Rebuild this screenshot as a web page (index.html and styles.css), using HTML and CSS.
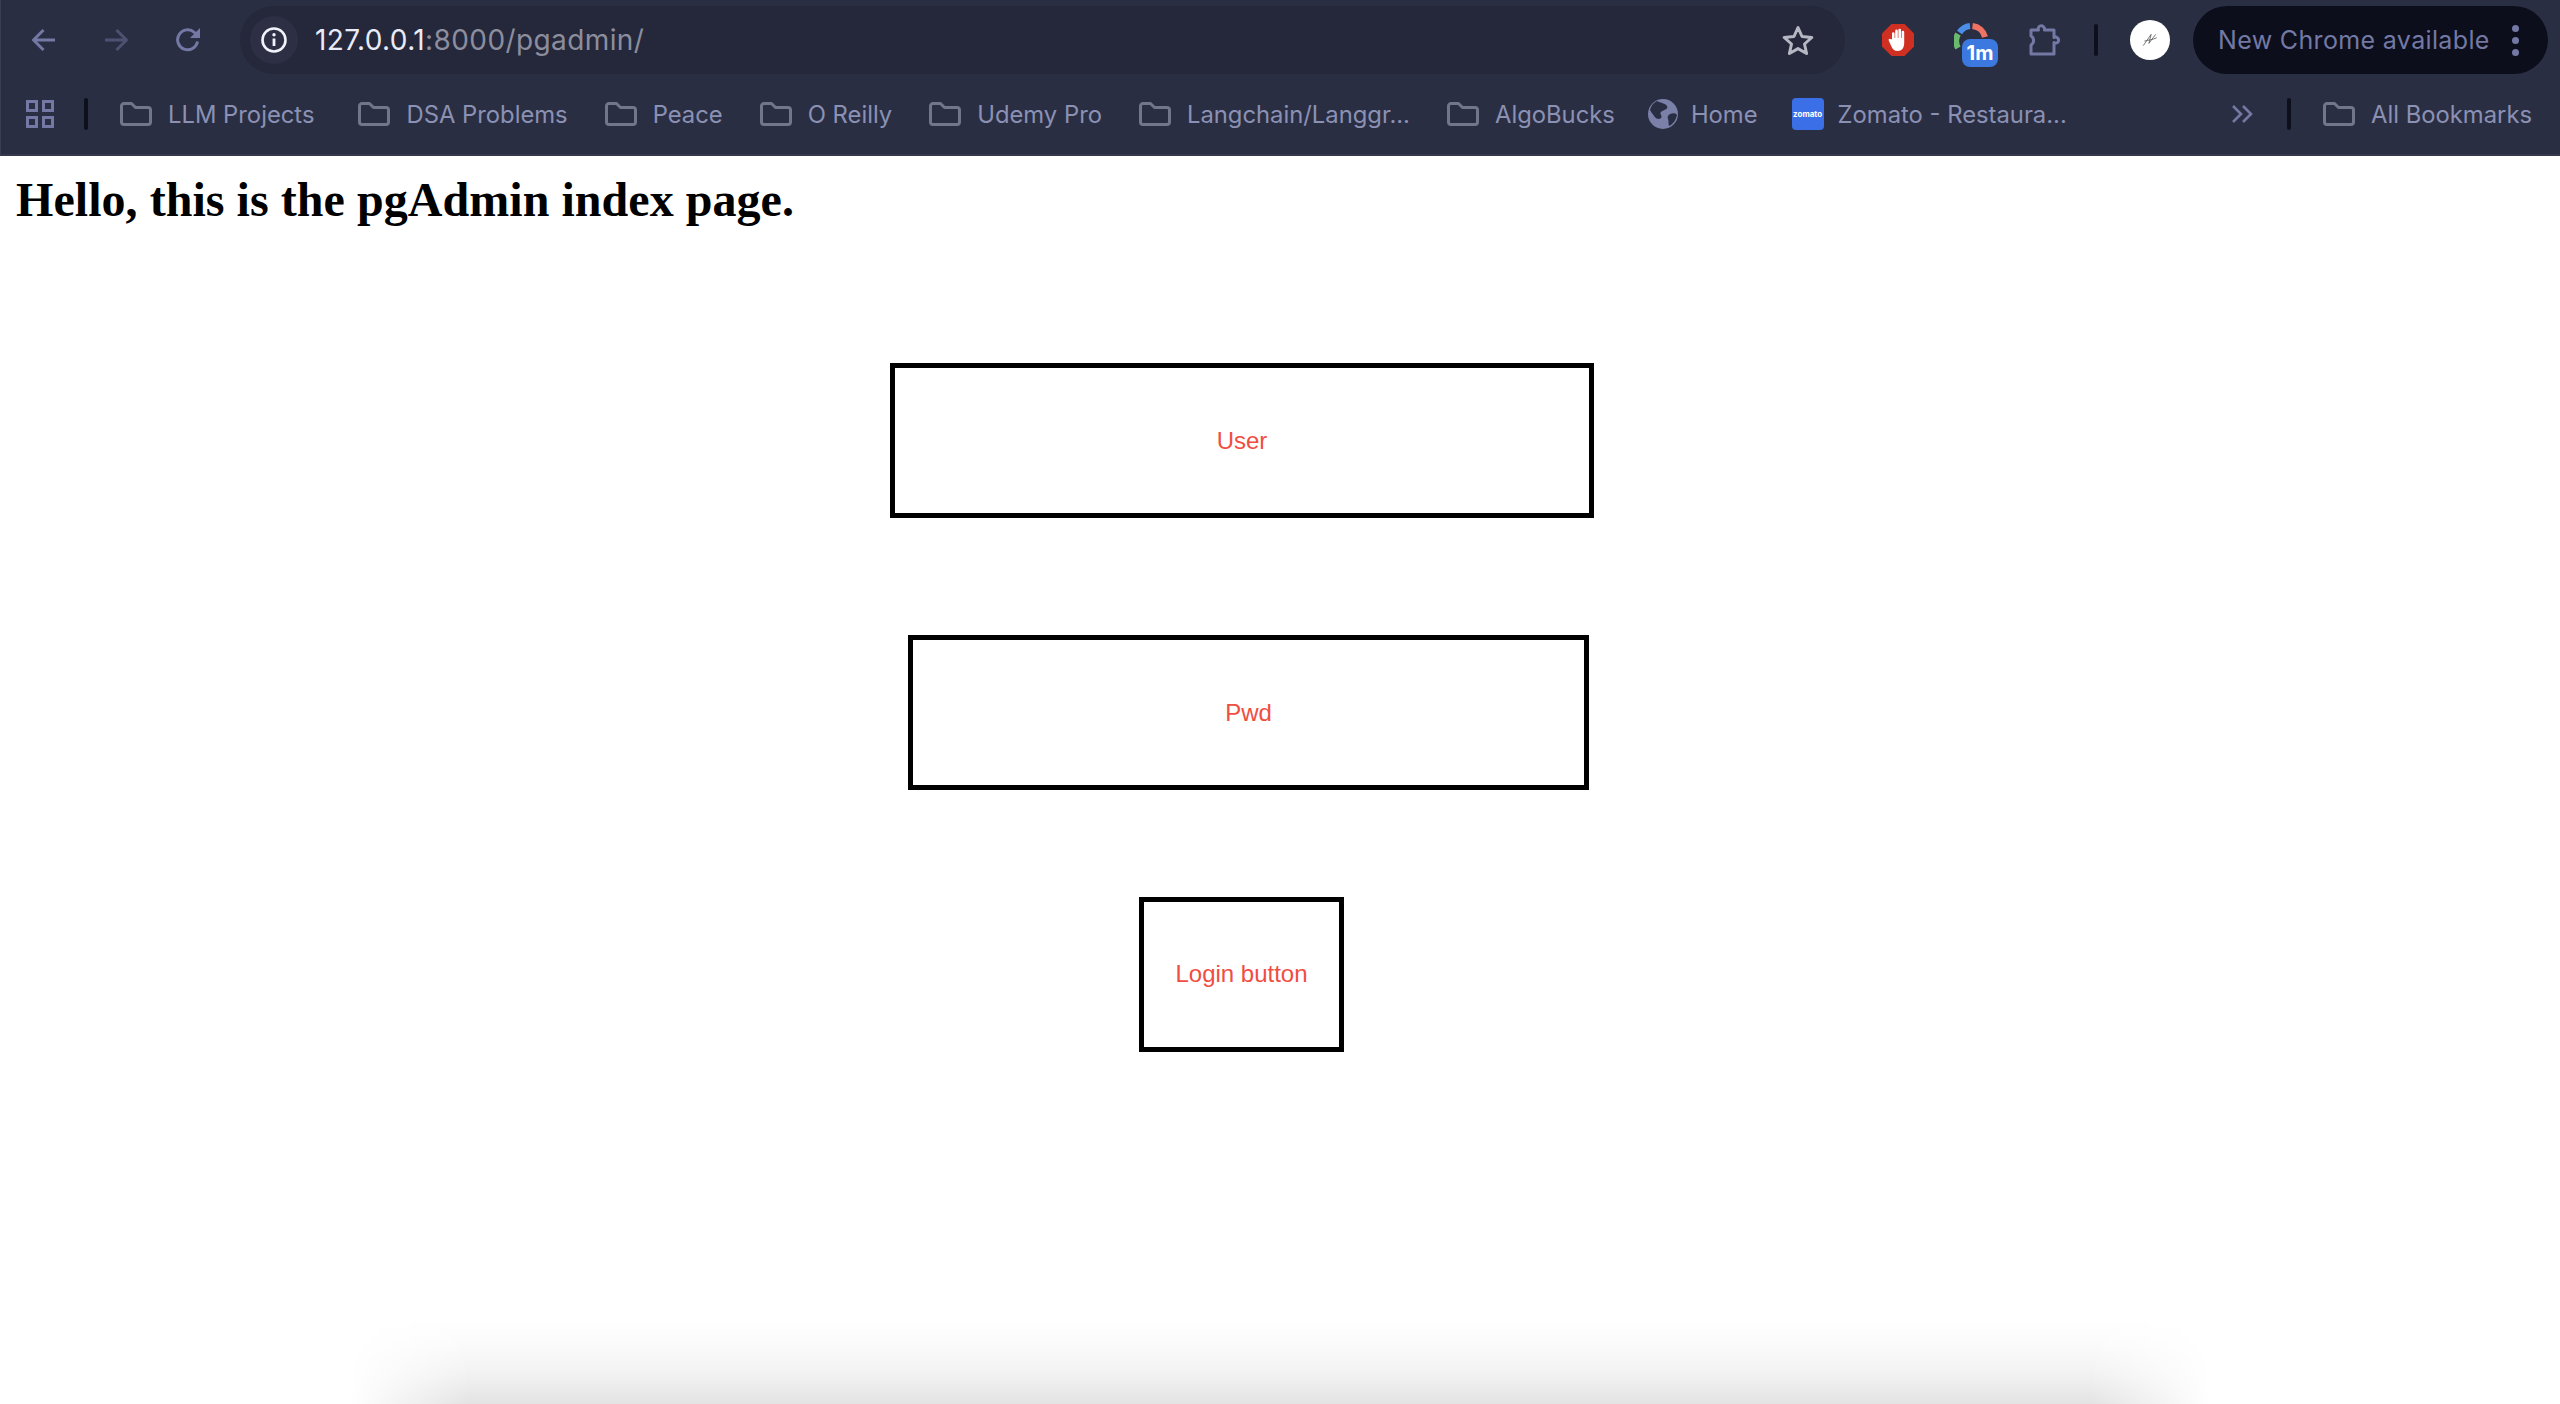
FILE: index.html
```html
<!DOCTYPE html>
<html lang="en">
<head>
    <meta charset="UTF-8">
    <meta name="viewport" content="width=device-width, initial-scale=1.0">
    <title>pgAdmin index</title>
    <link rel="stylesheet" href="styles.css">
</head>
<body>

    <svg class="icon-defs" width="0" height="0">
        <symbol id="folder" viewBox="0 0 32 24">
            <path d="M1.5 4a2.5 2.5 0 0 1 2.5-2.5h7.5l4 4H28a2.5 2.5 0 0 1 2.5 2.5v12a2.5 2.5 0 0 1-2.5 2.5H4A2.5 2.5 0 0 1 1.5 20z" fill="none" stroke="currentColor" stroke-width="3" stroke-linejoin="round"/>
        </symbol>
    </svg>

    <header class="browser">
        <div class="toolbar">
            <svg class="nav-icon" viewBox="0 0 24 24"><path d="M23 12H2M11.5 2 1.5 12l10 10" fill="none" stroke="currentColor" stroke-width="3"/></svg>
            <svg class="nav-icon nav-off" viewBox="0 0 24 24"><path d="M1 12h21M12.500 2l10 10-10 10" fill="none" stroke="currentColor" stroke-width="3"/></svg>
            <svg class="nav-icon" viewBox="0 0 24 24"><path d="M21.500 13.500A10 10 0 1 1 18.500 4.500L22 8" fill="none" stroke="currentColor" stroke-width="3"/><path d="M24 0v10H14z" fill="currentColor"/></svg>

            <div class="omnibox">
                <span class="site-chip">
                    <svg class="info-icon" viewBox="0 0 26 26"><circle cx="13" cy="13" r="11.500" fill="none" stroke="currentColor" stroke-width="2.600"/><path d="M13 11.500v7.500" stroke="currentColor" stroke-width="2.800"/><circle cx="13" cy="7.800" r="1.700" fill="currentColor"/></svg>
                </span>
                <span class="url"><span class="url-host">127.0.0.1</span>:8000/pgadmin/</span>
                <svg class="star-icon" viewBox="0 0 32 30"><path d="M16 2.500l4 9 9.800 1-7.300 6.500 2.100 9.500L16 23.600 7.400 28.500l2.100-9.500-7.300-6.500 9.800-1z" fill="none" stroke="currentColor" stroke-width="3" stroke-linejoin="round"/></svg>
            </div>

            <svg class="stop-icon" viewBox="0 0 32 32">
                <path d="M9.500 0h13L32 9.500v13L22.500 32h-13L0 22.500v-13z" fill="#d03022"/>
                <path d="M10 15V9.500a1.300 1.300 0 0 1 2.600 0V14h.6V6.800a1.300 1.300 0 0 1 2.600 0V14h.6V6a1.300 1.300 0 0 1 2.600 0v8h.6V8a1.300 1.300 0 0 1 2.600 0v11c0 5-2.500 8-6.500 8-3.500 0-5-1.700-6.500-5l-2.500-5.500c-.6-1.400 1.500-2.500 2.400-1z" fill="#fff"/>
            </svg>

            <div class="timer-ext">
                <svg class="gauge-icon" viewBox="0 0 34 34">
                    <path d="M4 25A14.500 14.500 0 0 1 4 11" fill="none" stroke="#69b96f" stroke-width="6"/>
                    <path d="M5.500 9.500A14.500 14.500 0 0 1 16 3" fill="none" stroke="#4b8fe8" stroke-width="6"/>
                    <path d="M18.500 3A14.500 14.500 0 0 1 31 14" fill="none" stroke="#ee7365" stroke-width="6"/>
                </svg>
                <span class="timer-badge">1m</span>
            </div>

            <svg class="puzzle-icon" viewBox="0 0 32 32"><path d="M3 6h7.500a3 3 0 0 1 5.500-2.500 3 3 0 0 1 .5 2.500H26v7.500a3 3 0 0 1 3.500.5 2.800 2.800 0 0 1-3.500 4.500V30H3v-9a5 5 0 0 0 2.500-4.500A5 5 0 0 0 3 12z" fill="none" stroke="currentColor" stroke-width="3" stroke-linejoin="round"/></svg>

            <span class="bar-divider"></span>

            <span class="avatar">
                <svg class="avatar-sign" viewBox="0 0 16 16"><path d="M2 13 9 3 7 11l6-8M3 9c3-1 7-1 11-3" fill="none" stroke="#555" stroke-width=".7"/></svg>
            </span>

            <div class="update-chip">
                <span>New Chrome available</span>
                <span class="kebab"><i></i><i></i><i></i></span>
            </div>
        </div>

        <nav class="bookmarks">
            <svg class="apps-icon" viewBox="0 0 28 28"><path d="M1.500 1.500h9v9h-9zM17.500 1.500h9v9h-9zM1.500 17.500h9v9h-9zM17.500 17.500h9v9h-9z" fill="none" stroke="currentColor" stroke-width="3"/></svg>
            <span class="bar-divider divider-apps"></span>

            <a class="bookmark bookmark-first"><svg class="folder"><use href="#folder"/></svg>LLM Projects</a>
            <a class="bookmark"><svg class="folder"><use href="#folder"/></svg>DSA Problems</a>
            <a class="bookmark"><svg class="folder"><use href="#folder"/></svg>Peace</a>
            <a class="bookmark"><svg class="folder"><use href="#folder"/></svg>O Reilly</a>
            <a class="bookmark"><svg class="folder"><use href="#folder"/></svg>Udemy Pro</a>
            <a class="bookmark"><svg class="folder"><use href="#folder"/></svg>Langchain/Langgr...</a>
            <a class="bookmark bookmark-algo"><svg class="folder"><use href="#folder"/></svg>AlgoBucks</a>
            <a class="bookmark bookmark-home">
                <svg class="globe" viewBox="0 0 30 30"><circle cx="15" cy="15" r="15" fill="#7a80a8"/><path d="M9 2c4 2 8 2 10 5s-4 4-6 6 2 4 0 6-5 1-7-2-3-4-4-6C3 7 5 4 9 2zM22 15c3-1 6-1 7 1-1 5-4 9-8 11-1-3 0-5-1-7s0-4 2-5z" fill="#2a2e42"/></svg>
                Home
            </a>
            <a class="bookmark bookmark-zomato"><span class="zomato-icon">zomato</span>Zomato - Restaura...</a>

            <svg class="more-icon" viewBox="0 0 22 20"><path d="M2 2l8 8-8 8M12 2l8 8-8 8" fill="none" stroke="currentColor" stroke-width="2.600"/></svg>
            <span class="bar-divider divider-more"></span>
            <a class="bookmark bookmark-all"><svg class="folder"><use href="#folder"/></svg>All Bookmarks</a>
        </nav>
    </header>

    <main class="page">
        <h1>Hello, this is the pgAdmin index page.</h1>

        <div class="login-form">
            <div class="box box-user">User</div>
            <div class="box box-pwd">Pwd</div>
            <div class="box box-login">Login button</div>
        </div>

        <div class="bottom-shadow"></div>
    </main>

</body>
</html>
```

FILE: styles.css
```css
body {
    margin: 0;
    height: 1404px;
    overflow: hidden;
    background: #fff;
    font-family: 'Inter', 'Liberation Sans', sans-serif;
}

.icon-defs {
    position: absolute;
}

svg {
    flex-shrink: 0;
}

/* browser chrome */
.browser {
    height: 156px;
    box-sizing: border-box;
    background: #2a2e42;
    border-left: 1px solid #3a3d52;
    border-bottom: 2px solid #35384c;
    color: #7379a4;
}

.toolbar {
    height: 80px;
    display: flex;
    align-items: center;
    padding: 0 12px 0 31px;
}

.nav-icon {
    width: 24px;
    height: 24px;
    margin-right: 48px;
}

.nav-off {
    color: #4e5272;
}

.omnibox {
    width: 1605px;
    height: 68px;
    margin-left: -8px;
    padding: 0 31px 0 10px;
    box-sizing: border-box;
    display: flex;
    align-items: center;
    background: #25273a;
    border-radius: 34px;
}

.site-chip {
    width: 48px;
    height: 48px;
    display: flex;
    align-items: center;
    justify-content: center;
    border-radius: 50%;
    background: #2d3044;
    color: #f1f2fa;
}

.info-icon {
    width: 26px;
    height: 26px;
}

.url {
    margin-left: 17px;
    flex: 1;
    font-size: 28px;
    letter-spacing: 0.4px;
    color: #8c8e9e;
}

.url-host {
    color: #e9ebf8;
}

.star-icon {
    width: 32px;
    height: 30px;
    color: #b5b7c2;
}

.stop-icon {
    width: 32px;
    height: 32px;
    margin-left: 37px;
}

.timer-ext {
    position: relative;
    width: 34px;
    height: 34px;
    margin-left: 40px;
}

.gauge-icon {
    width: 34px;
    height: 34px;
}

.timer-badge {
    position: absolute;
    left: 8px;
    top: 16px;
    width: 36px;
    height: 28px;
    line-height: 28px;
    text-align: center;
    border-radius: 8px;
    background: #3b78e0;
    color: #fff;
    font-size: 20px;
    font-weight: 700;
}

.puzzle-icon {
    width: 32px;
    height: 32px;
    margin-left: 40px;
}

.bar-divider {
    width: 4px;
    height: 32px;
    margin-left: 34px;
    border-radius: 2px;
    background: #0d0f1c;
    flex-shrink: 0;
}

.avatar {
    width: 40px;
    height: 40px;
    margin-left: 32px;
    display: flex;
    align-items: center;
    justify-content: center;
    border-radius: 50%;
    background: #fff;
}

.avatar-sign {
    width: 18px;
    height: 18px;
}

.update-chip {
    width: 355px;
    height: 68px;
    margin-left: 23px;
    padding: 0 29px 0 25px;
    box-sizing: border-box;
    display: flex;
    align-items: center;
    justify-content: space-between;
    border-radius: 34px;
    background: #0c0e1c;
    font-size: 25px;
    letter-spacing: 0.35px;
}

.kebab {
    display: flex;
    flex-direction: column;
    gap: 5px;
}

.kebab i {
    width: 7px;
    height: 7px;
    border-radius: 50%;
    background: #7379a4;
}

/* bookmarks row */
.bookmarks {
    height: 68px;
    display: flex;
    align-items: center;
    padding: 0 28px 0 25px;
    font-size: 23.8px;
    color: #8b91b4;
}

.apps-icon {
    width: 28px;
    height: 28px;
    color: #7379a4;
}

.divider-apps {
    margin-left: 30px;
    margin-right: 32px;
}

.bookmark {
    display: flex;
    align-items: center;
    gap: 16px;
    margin-right: 37px;
    white-space: nowrap;
}

.bookmark-first {
    margin-right: 44px;
}

.bookmark-algo {
    margin-right: 33px;
}

.bookmark-home {
    gap: 13px;
    margin-right: 34px;
}

.bookmark-zomato {
    gap: 14px;
    margin-right: 0;
}

.bookmark-all {
    margin-right: 0;
}

.folder {
    width: 32px;
    height: 24px;
    color: #71768b;
}

.globe {
    width: 30px;
    height: 30px;
}

.zomato-icon {
    width: 32px;
    height: 32px;
    flex-shrink: 0;
    line-height: 32px;
    text-align: center;
    overflow: hidden;
    border-radius: 4px;
    background: #3b6fe8;
    color: #fff;
    font-size: 8px;
    font-weight: 700;
}

.more-icon {
    width: 22px;
    height: 20px;
    margin-left: auto;
    color: #7379a4;
}

.divider-more {
    margin-left: 34px;
    margin-right: 32px;
}

/* page content */
.page {
    position: relative;
    height: 1248px;
}

h1 {
    margin: 0;
    padding: 16px 0 0 16px;
    font-family: 'Liberation Serif', serif;
    font-size: 48px;
    line-height: 55px;
    letter-spacing: 0.05px;
    color: #000;
}

.login-form {
    margin-top: 136px;
    display: flex;
    flex-direction: column;
    align-items: flex-start;
}

.box {
    height: 155px;
    box-sizing: border-box;
    display: flex;
    align-items: center;
    justify-content: center;
    border: 5px solid #000;
    font-family: 'Liberation Sans', Arial, sans-serif;
    font-size: 24px;
    color: #f14d42;
}

.box-user {
    width: 704px;
    margin-left: 890px;
    margin-bottom: 117px;
}

.box-pwd {
    width: 681px;
    margin-left: 908px;
    margin-bottom: 107px;
}

.box-login {
    width: 205px;
    margin-left: 1139px;
    padding-bottom: 2px;
}

/* shadow coming up from below the window */
.bottom-shadow {
    position: absolute;
    left: 350px;
    right: 350px;
    bottom: 0;
    height: 84px;
    background: linear-gradient(to top, rgba(0, 0, 0, 0.11), rgba(0, 0, 0, 0.05) 30px, rgba(0, 0, 0, 0.015) 60px, transparent);
    -webkit-mask-image: linear-gradient(to right, transparent, #000 120px, #000 calc(100% - 120px), transparent);
    mask-image: linear-gradient(to right, transparent, #000 120px, #000 calc(100% - 120px), transparent);
}
```
